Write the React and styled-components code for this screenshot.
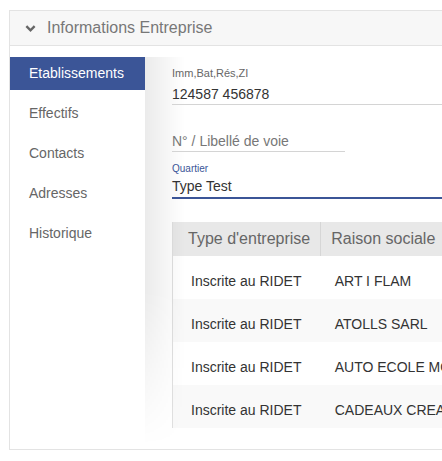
import React from 'react';
import styled, { createGlobalStyle } from 'styled-components';

const Global = createGlobalStyle`
	html, body {
		margin: 0;
		padding: 0;
		background: #fff;
		font-family: 'Liberation Sans', Arial, sans-serif;
		overflow: hidden;
	}
`;

const Page = styled.div`
	width: 442px;
	height: 461px;
	padding: 10px 0 0 9px;
	box-sizing: border-box;
	overflow: hidden;
`;

const Panel = styled.section`
	width: 460px;
	height: 440px;
	border: 1px solid #e3e3e3;
	box-sizing: border-box;
	display: flex;
	flex-direction: column;
`;

const Header = styled.header`
	height: 34px;
	background: #f7f7f7;
	border-bottom: 1px solid #e3e3e3;
	display: flex;
	align-items: center;
	gap: 11px;
	padding-left: 15px;
	color: #777;
	font-size: 16px;
	flex-shrink: 0;

	svg {
		width: 11px;
		height: 11px;
	}
`;

const Body = styled.div`
	display: flex;
	flex: 1;
	padding-top: 11px;
`;

const Nav = styled.nav`
	width: 135px;
	flex-shrink: 0;
	display: flex;
	flex-direction: column;
`;

const NavItem = styled.div`
	height: 33px;
	box-sizing: border-box;
	padding: 0 0 1px 19px;
	margin-bottom: 7px;
	display: flex;
	align-items: center;
	font-size: 14px;
	color: ${(p) => (p.$active ? '#fff' : '#666')};
	background: ${(p) => (p.$active ? '#3b5597' : 'transparent')};
`;

const Content = styled.div`
	position: relative;
	flex: 1;
	padding: 10px 0 0 27px;
	margin-bottom: 3px;

	&::before {
		content: '';
		position: absolute;
		left: 0;
		top: 0;
		bottom: 0;
		width: 40px;
		background: linear-gradient(to right, rgba(0, 0, 0, 0.08), rgba(0, 0, 0, 0));
		-webkit-mask-image: linear-gradient(to bottom, #000 60%, transparent 100%);
		mask-image: linear-gradient(to bottom, #000 60%, transparent 100%);
		pointer-events: none;
	}
`;

const Field = styled.div`
	position: relative;
	width: ${(p) => p.$width || '100%'};
	border-bottom: ${(p) => (p.$focus ? '2px solid #3b5597' : '1px solid #d4d4d4')};
	padding-bottom: ${(p) => (p.$focus ? '2px' : '1px')};
	margin-bottom: ${(p) => p.$mb || '0'};
`;

const Label = styled.div`
	font-size: ${(p) => (p.$focus ? '10px' : '11px')};
	color: ${(p) => (p.$focus ? '#3b5597' : '#666')};
	height: 13px;
	line-height: 13px;
	margin-bottom: ${(p) => (p.$focus ? '3px' : '6px')};
`;

const Value = styled.div`
	font-size: 14px;
	color: ${(p) => (p.$placeholder ? '#777' : '#333')};
	line-height: 17px;
`;

const Table = styled.table`
	border-collapse: collapse;
	margin-top: 23px;
	font-size: 14px;
	color: #333;
	white-space: nowrap;
	border-left: 1px solid #e0e0e0;
`;

const Th = styled.th`
	background: #e8e8e8;
	color: #666;
	font-weight: normal;
	font-size: 16px;
	height: 34px;
	box-sizing: border-box;
	text-align: left;
	padding: 0 10px 0 ${(p) => p.$pl || '15px'};
	border-right: 1px solid #d6d6d6;
`;

const Row = styled.tr`
	background: ${(p) => (p.$odd ? '#f9f9f9' : '#fff')};
`;

const Td = styled.td`
	line-height: 16px;
	padding: 17px 10px 10px ${(p) => p.$pl || '18px'};
`;

const navItems = ['Etablissements', 'Effectifs', 'Contacts', 'Adresses', 'Historique'];

const rows = [
	['Inscrite au RIDET', 'ART I FLAM'],
	['Inscrite au RIDET', 'ATOLLS SARL'],
	['Inscrite au RIDET', 'AUTO ECOLE MOANA'],
	['Inscrite au RIDET', 'CADEAUX CREATIONS'],
];

export default function App() {
	return (
		<>
			<Global />
			<Page>
				<Panel>
					<Header>
						<svg viewBox="0 0 12 12">
							<path d="M1.5 3.5 L6 8 L10.5 3.5" fill="none" stroke="#666" strokeWidth="2.6" strokeLinejoin="miter" />
						</svg>
						Informations Entreprise
					</Header>
					<Body>
						<Nav>
							{navItems.map((item, i) => (
								<NavItem key={item} $active={i === 0}>
									{item}
								</NavItem>
							))}
						</Nav>
						<Content>
							<Field $mb="28px">
								<Label>Imm,Bat,Rés,ZI</Label>
								<Value>124587 456878</Value>
							</Field>
							<Field $width="173px" $mb="10px">
								<Value $placeholder>N° / Libellé de voie</Value>
							</Field>
							<Field $focus>
								<Label $focus>Quartier</Label>
								<Value>Type Test</Value>
							</Field>
							<Table>
								<thead>
									<tr>
										<Th>Type d'entreprise</Th>
										<Th $pl="10px">Raison sociale</Th>
									</tr>
								</thead>
								<tbody>
									{rows.map((r, i) => (
										<Row key={r[1]} $odd={i % 2 === 1}>
											<Td>{r[0]}</Td>
											<Td $pl="14px">{r[1]}</Td>
										</Row>
									))}
								</tbody>
							</Table>
						</Content>
					</Body>
				</Panel>
			</Page>
		</>
	);
}
